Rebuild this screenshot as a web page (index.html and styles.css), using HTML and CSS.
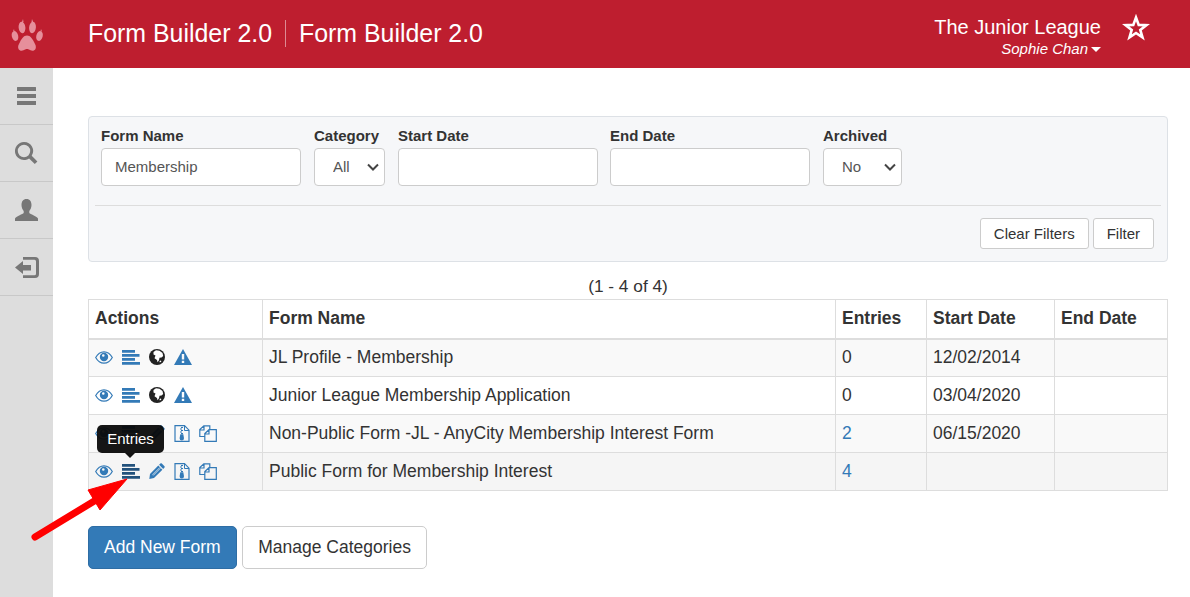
FILE: index.html
```html
<!DOCTYPE html>
<html lang="en">
<head>
<meta charset="utf-8">
<title>Form Builder 2.0</title>
<link rel="stylesheet" href="styles.css">
</head>
<body>
<svg class="sprite" aria-hidden="true">
  <symbol id="i-eye" viewBox="0 0 18 13"><path fill="none" stroke="currentColor" stroke-width="1.200" d="M.7 6.500C2.700 2.800 5.500.8 9 .8s6.300 2 8.300 5.700c-2 3.700-4.800 5.700-8.300 5.700S2.700 10.200.7 6.500Z"/><path fill-rule="evenodd" d="M4.800 6a4.200 4.200 0 1 1 8.400 0 4.200 4.200 0 0 1-8.400 0Zm2.200-1.500a1.300 1.300 0 1 0 2.600 0 1.300 1.300 0 0 0-2.600 0Z"/></symbol>
  <symbol id="i-lines" viewBox="0 0 18 15"><path d="M0 0h13v2.700H0zM0 4h17.500v2.700H0zM0 8h13v2.700H0zM0 12h18v2.700H0z"/></symbol>
  <symbol id="i-globe" viewBox="0 0 16 16"><circle cx="8" cy="8" r="8" fill="#222"/><path fill="#fff" d="M4.500 3 7 1.300l3.500.5 3 2.200.7 3-1.700 1.500-2 .3-.5 2.500-1.500 2L8 11 5.500 9.300 6.500 6.500 4.500 5.500ZM10.500 12l1.500-.5.300 1.200-1.500.8Z"/></symbol>
  <symbol id="i-warn" viewBox="0 0 18 16"><path fill-rule="evenodd" d="M9 0 18 16H0L9 0ZM7.800 5v5.500h2.400V5H7.800Zm0 6.700V14h2.400v-2.300H7.800Z"/></symbol>
  <symbol id="i-pencil" viewBox="0 0 16 16"><path d="M12.800.5 15.500 3.200c.4.400.4 1 0 1.400L14.200 5.900 10.100 1.800 11.400.5c.4-.4 1-.4 1.400 0ZM9.300 2.600 13.400 6.700 5 15.100.3 16 1 11Z"/><path fill="none" stroke="#f5f5f5" stroke-width=".7" d="M10.800 4.500 3.500 11.800M4.200 12.500l7.300-7.300"/></symbol>
  <symbol id="i-zip" viewBox="0 0 16 17"><path fill="none" stroke="currentColor" stroke-width="1.200" d="M1 .7h9.500L15 5.200V16.300H1Z"/><path fill="none" stroke="currentColor" d="M10.500 1v4.500H15"/><path d="M7 2h2v1H7zM6 3.500h2v1H6zM7 5h2v1H7zM6 6.500h2v1H6zM7 8h2v1H7zM6.300 9.300h3l.7 4a2.200 2.200 0 0 1-4.400 0Z"/></symbol>
  <symbol id="i-copy" viewBox="0 0 18 17"><path fill="none" stroke="currentColor" stroke-width="1.200" d="M5.500 11.500H.8V4.500L4.800.8h6v3.700M10 4.700h7.300v11.600H5.800V8.500ZM5 1v4H1M10 5v4H6"/></symbol>
</svg>

<header class="topbar">
  <div class="logo">
    <svg width="34" height="36" viewBox="0 0 34 36"><g fill="#e68f9b"><ellipse cx="5" cy="18" rx="3.200" ry="5" transform="rotate(-14 5 18)"/><ellipse cx="12" cy="9.500" rx="3.400" ry="5.800" transform="rotate(-6 12 9.500)"/><ellipse cx="22.500" cy="9.500" rx="3.400" ry="5.800" transform="rotate(6 22.500 9.500)"/><ellipse cx="29.500" cy="18" rx="3.200" ry="5" transform="rotate(14 29.500 18)"/><path d="M17 17.500c3.500 0 5.500 3.500 7 6.500 1.500 2.800 2.500 4.500 1.500 7-1 2-3.500 2-5 1.300-1.500-.7-2-1.300-3.500-1.300s-2 .6-3.500 1.300c-1.500.7-4 .7-5-1.300-1-2.500 0-4.200 1.500-7 1.500-3 3.500-6.500 7-6.500Z"/><path d="M3 13.500 4 11l.5 2.500ZM12 4l1-3 .5 3ZM21.500 4l.5-3 1.200 3ZM30.500 13.500l.5-2.500 1 2.500Z"/></g></svg>
  </div>
  <div class="titles"><span class="title">Form Builder 2.0</span><span class="title title-second">Form Builder 2.0</span></div>
  <div class="account">
    <div class="org">The Junior League</div>
    <div class="user">Sophie Chan<span class="caret"></span></div>
  </div>
  <svg class="star" width="28" height="27" viewBox="0 0 28 27"><path fill="none" stroke="#fff" stroke-width="2.600" d="M14 3.500 16.700 10.900 24.500 11.100 18.300 15.900 20.500 23.400 14 19 7.500 23.400 9.700 15.900 3.500 11.100 11.300 10.900Z"/></svg>
</header>

<div class="shell">
  <nav class="sidebar">
    <a class="side-item"><svg width="19" height="18" viewBox="0 0 19 18"><path d="M.5 0h18a.5.5 0 0 1 .5.5V4H0V.5A.5.5 0 0 1 .5 0ZM0 7h19v4H0zM0 14h19v3.500a.5.5 0 0 1-.5.5H.5a.5.5 0 0 1-.5-.5z"/></svg></a>
    <a class="side-item"><svg width="23" height="23" viewBox="0 0 23 23"><path fill-rule="evenodd" d="M9 0a9 9 0 1 0 5.100 16.400l5.700 5.700 2.600-2.600-5.700-5.700A9 9 0 0 0 9 0Zm0 2.800a6.200 6.200 0 1 1 0 12.400A6.200 6.200 0 0 1 9 2.800Z"/></svg></a>
    <a class="side-item"><svg width="23" height="23" viewBox="0 0 23 23"><path d="M11.500 0c3.400 0 5 2.600 5 6 0 2.500-1 4.700-2.200 6v2c1 1 7 3 8.700 5.500V22H0v-2.500C1.700 17 7.700 15 8.700 14v-2C7.500 10.700 6.500 8.500 6.500 6c0-3.400 1.600-6 5-6Z"/></svg></a>
    <a class="side-item"><svg width="24" height="21" viewBox="0 0 24 21"><path d="M8 0h12a4 4 0 0 1 4 4v13a4 4 0 0 1-4 4H8v-2.800h11.500a1.500 1.500 0 0 0 1.500-1.500V4.300a1.500 1.500 0 0 0-1.500-1.500H8Z"/><path d="M0 10.500 8 4v4h8v5.500H8V17Z"/></svg></a>
  </nav>

  <main class="content">
    <form class="filters">
      <div class="filter-row">
        <label class="field field-name"><span class="label">Form Name</span><input class="control" type="text" value="Membership"></label>
        <label class="field field-cat"><span class="label">Category</span><select class="control select"><option>All</option></select></label>
        <label class="field field-date"><span class="label">Start Date</span><input class="control" type="text"></label>
        <label class="field field-date"><span class="label">End Date</span><input class="control" type="text"></label>
        <label class="field field-arch"><span class="label">Archived</span><select class="control select"><option>No</option></select></label>
      </div>
      <div class="filter-actions">
        <button class="btn" type="button">Clear Filters</button>
        <button class="btn" type="button">Filter</button>
      </div>
    </form>

    <div class="count">(1 - 4 of 4)</div>

    <table class="grid">
      <colgroup><col class="c1"><col class="c2"><col class="c3"><col class="c4"><col class="c5"></colgroup>
      <thead>
        <tr><th>Actions</th><th>Form Name</th><th>Entries</th><th>Start Date</th><th>End Date</th></tr>
      </thead>
      <tbody>
        <tr class="odd">
          <td><div class="icons"><svg class="ic eye"><use href="#i-eye"/></svg><svg class="ic lines"><use href="#i-lines"/></svg><svg class="ic globe"><use href="#i-globe"/></svg><svg class="ic warn"><use href="#i-warn"/></svg></div></td>
          <td>JL Profile - Membership</td><td>0</td><td>12/02/2014</td><td></td>
        </tr>
        <tr>
          <td><div class="icons"><svg class="ic eye"><use href="#i-eye"/></svg><svg class="ic lines"><use href="#i-lines"/></svg><svg class="ic globe"><use href="#i-globe"/></svg><svg class="ic warn"><use href="#i-warn"/></svg></div></td>
          <td>Junior League Membership Application</td><td>0</td><td>03/04/2020</td><td></td>
        </tr>
        <tr class="odd">
          <td><div class="icons"><svg class="ic eye"><use href="#i-eye"/></svg><svg class="ic lines"><use href="#i-lines"/></svg><svg class="ic pencil"><use href="#i-pencil"/></svg><svg class="ic zip"><use href="#i-zip"/></svg><svg class="ic copy"><use href="#i-copy"/></svg></div></td>
          <td>Non-Public Form -JL - AnyCity Membership Interest Form</td><td><a class="link">2</a></td><td>06/15/2020</td><td></td>
        </tr>
        <tr class="hover">
          <td class="tip-cell"><div class="icons"><svg class="ic eye"><use href="#i-eye"/></svg><svg class="ic lines active"><use href="#i-lines"/></svg><svg class="ic pencil"><use href="#i-pencil"/></svg><svg class="ic zip"><use href="#i-zip"/></svg><svg class="ic copy"><use href="#i-copy"/></svg></div>
            <div class="tooltip">Entries</div>
          </td>
          <td>Public Form for Membership Interest</td><td><a class="link">4</a></td><td></td><td></td>
        </tr>
      </tbody>
    </table>

    <div class="page-actions">
      <button class="btn-lg primary" type="button">Add New Form</button>
      <button class="btn-lg" type="button">Manage Categories</button>
    </div>
  </main>
</div>

<svg class="arrow" width="110" height="70" viewBox="0 0 110 70"><path d="M5 61 66 24" stroke="#f00" stroke-width="7" stroke-linecap="round" fill="none"/><path d="M97 3 58 14 70 34Z" fill="#f00" stroke="#f00" stroke-linejoin="round"/></svg>
</body>
</html>
```
FILE: styles.css
```css
* { box-sizing: border-box; }
html, body { height: 100%; }
body {
  margin: 0;
  font-family: "Liberation Sans", Arial, sans-serif;
  font-size: 17.500px;
  color: #333;
  background: #fff;
  overflow: hidden;
  display: flex;
  flex-direction: column;
  position: relative;
}
.sprite { display: none; }

.topbar {
  height: 68px;
  flex: none;
  background: #be1e2f;
  color: #fff;
  display: flex;
  align-items: center;
}
.logo { width: 88px; padding: 4px 0 0 10px; flex: none; display: flex; }
.titles { flex: 1; display: flex; align-items: center; padding-bottom: 2px; }
.title { font-size: 24.900px; line-height: 27px; }
.title-second { margin-left: 13px; padding-left: 13px; border-left: 1px solid #dd8a93; }
.account { text-align: right; padding-top: 3px; }
.org { font-size: 20px; line-height: 24px; margin-bottom: 1px; }
.user { font-size: 15px; font-style: italic; line-height: 17px; }
.caret {
  display: inline-block;
  margin-left: 3px;
  vertical-align: middle;
  border-top: 5px solid #fff;
  border-left: 5px solid transparent;
  border-right: 5px solid transparent;
}
.star { margin: 0 40px 14px 21px; flex: none; }

.shell { flex: 1; display: flex; min-height: 0; }
.sidebar { width: 53px; flex: none; background: #ddd; }
.side-item {
  height: 57px;
  display: flex;
  align-items: center;
  justify-content: center;
  border-bottom: 1px solid #c8c8c8;
}
.side-item svg { fill: #777; }

.content { flex: 1; padding: 48px 22px 0 35px; min-width: 0; }

.filters {
  height: 146px;
  background: #f6f7f9;
  border: 1px solid #dde1e6;
  border-radius: 4px;
  padding: 11px 6px 0;
}
.filter-row {
  display: flex;
  padding: 0 0 19px 6px;
  border-bottom: 1px solid #ddd;
}
.field { display: flex; flex-direction: column; }
.field-name { width: 213px; }
.field-cat { width: 84px; }
.field-date { width: 212px; }
.field-date + .field-arch { margin-left: 1px; }
.label { font-size: 15px; font-weight: bold; line-height: 16px; margin-bottom: 4px; color: #333; }
.control {
  height: 38px;
  border: 1px solid #ccc;
  border-radius: 4px;
  background: #fff;
  font-family: inherit;
  font-size: 15px;
  color: #555;
  padding: 0 13px 2px;
}
.field-name .control { width: 200px; }
.field-date .control { width: 200px; }
.field-cat .control { width: 71px; }
.field-arch .control { width: 79px; }
.select {
  appearance: none;
  padding: 0 0 2px 18px;
  background-image: url("data:image/svg+xml,%3Csvg xmlns='http://www.w3.org/2000/svg' width='12' height='8'%3E%3Cpath d='M1 1.500l5 5 5-5' fill='none' stroke='%23444' stroke-width='2'/%3E%3C/svg%3E");
  background-repeat: no-repeat;
  background-position: right 5px center;
}

.filter-actions { display: flex; justify-content: flex-end; gap: 4px; padding: 12px 7px 0 0; }
.btn {
  height: 31px;
  padding: 0 13px;
  border: 1px solid #ccc;
  border-radius: 3px;
  background: #fff;
  color: #333;
  font-family: inherit;
  font-size: 15px;
}

.count { text-align: center; font-size: 17.300px; line-height: 20px; margin: 14px 0 3px; }

.grid { width: 1079px; border-collapse: collapse; table-layout: fixed; }
.c1 { width: 174px; }
.c2 { width: 573px; }
.c3 { width: 91px; }
.c4 { width: 128px; }
.c5 { width: 113px; }
.grid th, .grid td { border: 1px solid #ddd; padding: 0 6px; font-size: 17.500px; line-height: 20px; text-align: left; }
.grid th { height: 39px; font-weight: bold; border-bottom: 2px solid #ddd; padding-bottom: 1px; }
.grid td { height: 38px; padding-bottom: 1px; }
.odd td { background: #f9f9f9; }
.hover td { background: #f5f5f5; }
.link { color: #337ab7; }

.icons { display: flex; align-items: center; height: 20px; }
.ic { fill: #337ab7; color: #337ab7; flex: none; display: block; }
.eye { width: 18px; height: 13px; }
.lines { width: 18px; height: 15px; margin-left: 9px; }
.globe { width: 16px; height: 16px; margin-left: 9px; }
.warn { width: 18px; height: 16px; margin-left: 9px; }
.pencil { width: 16px; height: 16px; margin-left: 9px; }
.zip { width: 16px; height: 17px; margin-left: 9px; }
.copy { width: 18px; height: 17px; margin-left: 9px; }
.active { fill: #23527c; }

.tip-cell { position: relative; }
.tooltip {
  position: absolute;
  left: 8px;
  top: -28px;
  width: 67px;
  height: 28px;
  background: rgba(10, 10, 10, .95);
  color: #fff;
  border-radius: 5px;
  font-size: 15px;
  line-height: 27px;
  text-align: center;
}
.tooltip::after {
  content: "";
  position: absolute;
  left: 28px;
  top: 28px;
  border-top: 5px solid #111;
  border-left: 5px solid transparent;
  border-right: 5px solid transparent;
}

.page-actions { display: flex; gap: 5px; margin-top: 35px; }
.btn-lg {
  height: 43px;
  padding: 0 15.500px;
  border: 1px solid #ccc;
  border-radius: 5px;
  background: #fff;
  color: #333;
  font-family: inherit;
  font-size: 17.500px;
}
.primary { background: #337ab7; border-color: #2e6da4; color: #fff; padding: 0 15px; }

.arrow { position: absolute; left: 30px; top: 476px; }
```
